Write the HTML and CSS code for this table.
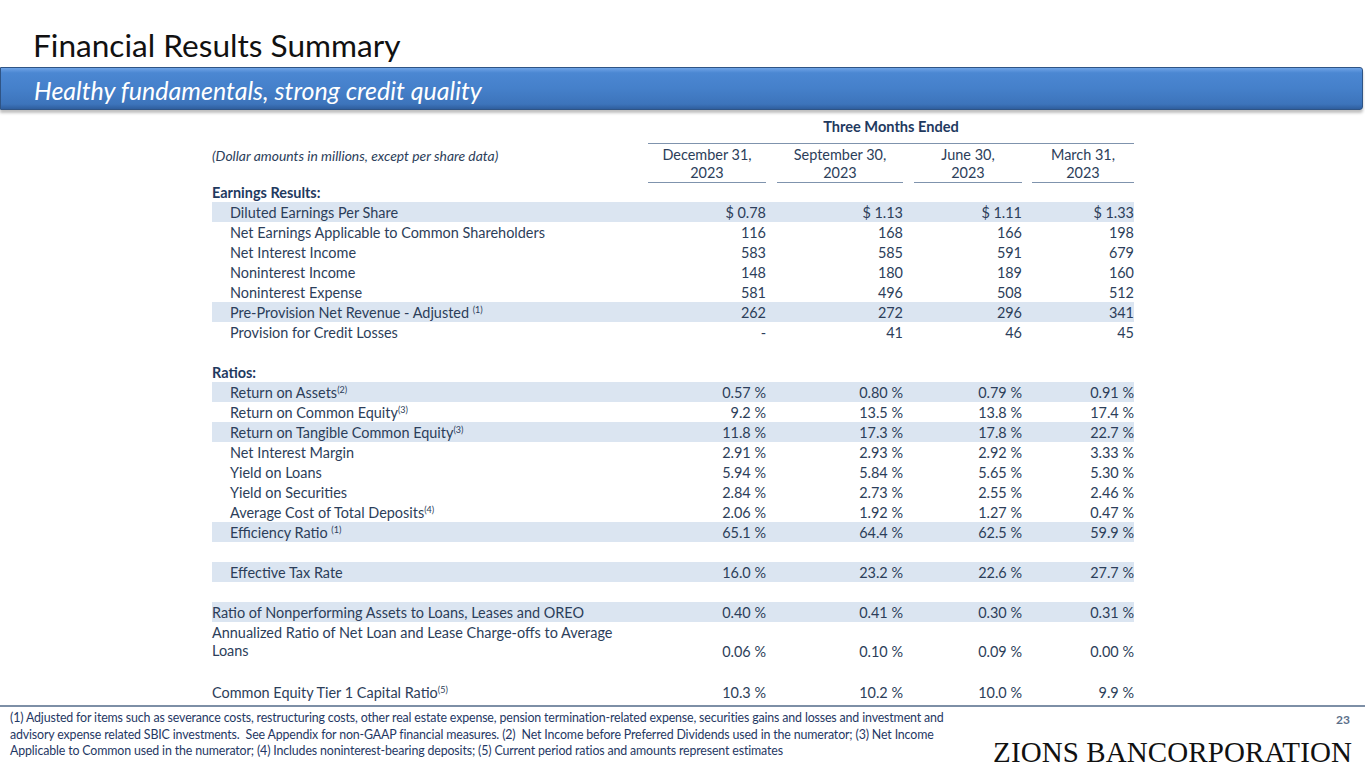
FILE: index.html
```html
<!DOCTYPE html>
<html>
<head>
<meta charset="utf-8">
<link rel="stylesheet" href="styles.css">
</head>
<body>
<div class="slide">
  <h1 class="title">Financial Results Summary</h1>
  <div class="banner"><span>Healthy fundamentals, strong credit quality</span></div>

  <div class="tbl">
    <div class="row head1">
      <div class="lbl"></div>
      <div class="span4">Three Months Ended</div>
    </div>
    <div class="row head2">
      <div class="lbl note">(Dollar amounts in millions, except per share data)</div>
      <div class="ch">December 31,<br>2023</div><div></div>
      <div class="ch">September 30,<br>2023</div><div></div>
      <div class="ch">June 30,<br>2023</div><div></div>
      <div class="ch">March 31,<br>2023</div>
    </div>
    <div class="row"><div class="lbl sec">Earnings Results:</div></div>
    <div class="row sh"><div class="lbl ind">Diluted Earnings Per Share</div><div class="v">$ 0.78</div><div></div><div class="v">$ 1.13</div><div></div><div class="v">$ 1.11</div><div></div><div class="v">$ 1.33</div></div>
    <div class="row"><div class="lbl ind">Net Earnings Applicable to Common Shareholders</div><div class="v">116</div><div></div><div class="v">168</div><div></div><div class="v">166</div><div></div><div class="v">198</div></div>
    <div class="row"><div class="lbl ind">Net Interest Income</div><div class="v">583</div><div></div><div class="v">585</div><div></div><div class="v">591</div><div></div><div class="v">679</div></div>
    <div class="row"><div class="lbl ind">Noninterest Income</div><div class="v">148</div><div></div><div class="v">180</div><div></div><div class="v">189</div><div></div><div class="v">160</div></div>
    <div class="row"><div class="lbl ind">Noninterest Expense</div><div class="v">581</div><div></div><div class="v">496</div><div></div><div class="v">508</div><div></div><div class="v">512</div></div>
    <div class="row sh"><div class="lbl ind">Pre-Provision Net Revenue - Adjusted <sup>(1)</sup></div><div class="v">262</div><div></div><div class="v">272</div><div></div><div class="v">296</div><div></div><div class="v">341</div></div>
    <div class="row"><div class="lbl ind">Provision for Credit Losses</div><div class="v">-</div><div></div><div class="v">41</div><div></div><div class="v">46</div><div></div><div class="v">45</div></div>
    <div class="row"></div>
    <div class="row"><div class="lbl sec">Ratios:</div></div>
    <div class="row sh"><div class="lbl ind">Return on Assets<sup>(2)</sup></div><div class="v">0.57 %</div><div></div><div class="v">0.80 %</div><div></div><div class="v">0.79 %</div><div></div><div class="v">0.91 %</div></div>
    <div class="row"><div class="lbl ind">Return on Common Equity<sup>(3)</sup></div><div class="v">9.2 %</div><div></div><div class="v">13.5 %</div><div></div><div class="v">13.8 %</div><div></div><div class="v">17.4 %</div></div>
    <div class="row sh"><div class="lbl ind">Return on Tangible Common Equity<sup>(3)</sup></div><div class="v">11.8 %</div><div></div><div class="v">17.3 %</div><div></div><div class="v">17.8 %</div><div></div><div class="v">22.7 %</div></div>
    <div class="row"><div class="lbl ind">Net Interest Margin</div><div class="v">2.91 %</div><div></div><div class="v">2.93 %</div><div></div><div class="v">2.92 %</div><div></div><div class="v">3.33 %</div></div>
    <div class="row"><div class="lbl ind">Yield on Loans</div><div class="v">5.94 %</div><div></div><div class="v">5.84 %</div><div></div><div class="v">5.65 %</div><div></div><div class="v">5.30 %</div></div>
    <div class="row"><div class="lbl ind">Yield on Securities</div><div class="v">2.84 %</div><div></div><div class="v">2.73 %</div><div></div><div class="v">2.55 %</div><div></div><div class="v">2.46 %</div></div>
    <div class="row"><div class="lbl ind">Average Cost of Total Deposits<sup>(4)</sup></div><div class="v">2.06 %</div><div></div><div class="v">1.92 %</div><div></div><div class="v">1.27 %</div><div></div><div class="v">0.47 %</div></div>
    <div class="row sh"><div class="lbl ind">Efficiency Ratio <sup>(1)</sup></div><div class="v">65.1 %</div><div></div><div class="v">64.4 %</div><div></div><div class="v">62.5 %</div><div></div><div class="v">59.9 %</div></div>
    <div class="row"></div>
    <div class="row sh"><div class="lbl ind">Effective Tax Rate</div><div class="v">16.0 %</div><div></div><div class="v">23.2 %</div><div></div><div class="v">22.6 %</div><div></div><div class="v">27.7 %</div></div>
    <div class="row"></div>
    <div class="row sh"><div class="lbl">Ratio of Nonperforming Assets to Loans, Leases and OREO</div><div class="v">0.40 %</div><div></div><div class="v">0.41 %</div><div></div><div class="v">0.30 %</div><div></div><div class="v">0.31 %</div></div>
    <div class="row tall"><div class="lbl wrap">Annualized Ratio of Net Loan and Lease Charge-offs to Average<br>Loans</div><div class="v">0.06 %</div><div></div><div class="v">0.10 %</div><div></div><div class="v">0.09 %</div><div></div><div class="v">0.00 %</div></div>
    <div class="row"></div>
    <div class="row"><div class="lbl">Common Equity Tier 1 Capital Ratio<sup>(5)</sup></div><div class="v">10.3 %</div><div></div><div class="v">10.2 %</div><div></div><div class="v">10.0 %</div><div></div><div class="v">9.9 %</div></div>
  </div>

  <div class="footer">
    <p class="fn"><span>(1) Adjusted for items such as severance costs, restructuring costs, other real estate expense, pension termination-related expense, securities gains and losses and investment and</span><span>advisory expense related SBIC investments.&nbsp; See Appendix for non-GAAP financial measures. (2)&nbsp; Net Income before Preferred Dividends used in the numerator; (3) Net Income</span><span>Applicable to Common used in the numerator; (4) Includes noninterest-bearing deposits; (5) Current period ratios and amounts represent estimates</span></p>
    <div class="brand">
      <div class="pg">23</div>
      <div class="logo">ZIONS BANCORPORATION</div>
    </div>
  </div>
</div>
</body>
</html>
```

FILE: styles.css
```css
*, *::before, *::after {
  box-sizing: border-box;
}
html, body {
  margin: 0;
  padding: 0;
  background: #ffffff;
}
.slide {
  width: 1365px;
  height: 768px;
  overflow: hidden;
  font-family: Lato, "Open Sans", sans-serif;
  color: #2c3e5a;
  display: flex;
  flex-direction: column;
}
.title {
  margin: 0;
  padding: 26px 0 0 33px;
  height: 67px;
  font-weight: 400;
  font-size: 31.6px;
  line-height: 38px;
  color: #111111;
}
.banner {
  height: 43px;
  flex: none;
  margin-right: 2px;
  border: 1px solid #2f5485;
  border-radius: 0 3px 3px 0;
  background: linear-gradient(to bottom, #6ea3e6 0%, #4b87d2 12%, #4580ca 50%, #3d74bb 88%, #2f5e9e 100%);
  box-shadow: 0 3px 3px rgba(0,0,0,0.25);
  display: flex;
  align-items: center;
  padding-left: 33px;
}
.banner span {
  font-style: italic;
  font-size: 25px;
  color: #ffffff;
  position: relative;
  top: 1px;
}
.tbl {
  margin: 0 0 0 212px;
  width: 922px;
  font-size: 14.45px;
}
.row {
  display: grid;
  grid-template-columns: 436px 118px 11px 126px 11px 108px 10px 102px;
  height: 20px;
  align-items: center;
  line-height: 17px;
}
.row.sh { background: #dbe5f1; }
.row.tall { height: 40px; }
.head1 { height: 34px; align-items: stretch; }
.span4 {
  grid-column: 2 / 9;
  text-align: center;
  font-weight: 700;
  color: #1f3a5f;
  font-size: 14.6px;
  border-bottom: 1px solid #7f93ad;
  padding-top: 8px;
  line-height: 18px;
}
.head2 { height: 38px; align-items: stretch; }
.head2 .ch {
  text-align: center;
  line-height: 18px;
  border-bottom: 1px solid #7f93ad;
  padding-top: 2px;
}
.note { font-style: italic; font-size: 13.9px; padding-top: 3px; }
.lbl.sec { font-weight: 700; color: #1f3a5f; }
.lbl.ind { padding-left: 18px; }
.lbl { white-space: nowrap; }
.lbl.wrap { line-height: 18px; }
.tall .v { align-self: end; padding-bottom: 2px; }
.v { text-align: right; }
sup {
  font-size: 9px;
  line-height: 0;
  vertical-align: 5px;
}
.footer {
  margin-top: 3px;
  border-top: 2px solid #7d8fa6;
  display: flex;
  justify-content: space-between;
  padding: 0 13px 0 10px;
  flex: 1;
}
.fn {
  margin: 3px 0 0 0;
  font-size: 12.4px;
  line-height: 16.5px;
  letter-spacing: -0.15px;
  color: #1f3864;
  display: flex;
  flex-direction: column;
  white-space: nowrap;
}
.brand {
  display: flex;
  flex-direction: column;
  align-items: flex-end;
}
.pg {
  margin-top: 5px;
  font-size: 12px;
  line-height: 15px;
  font-weight: 700;
  color: #5b6f8a;
  padding-right: 2px;
}
.logo {
  margin-top: 11px;
  font-family: "Liberation Serif", "DejaVu Serif", serif;
  font-size: 29px;
  letter-spacing: 0.1px;
  color: #111111;
  line-height: 28px;
}
```
